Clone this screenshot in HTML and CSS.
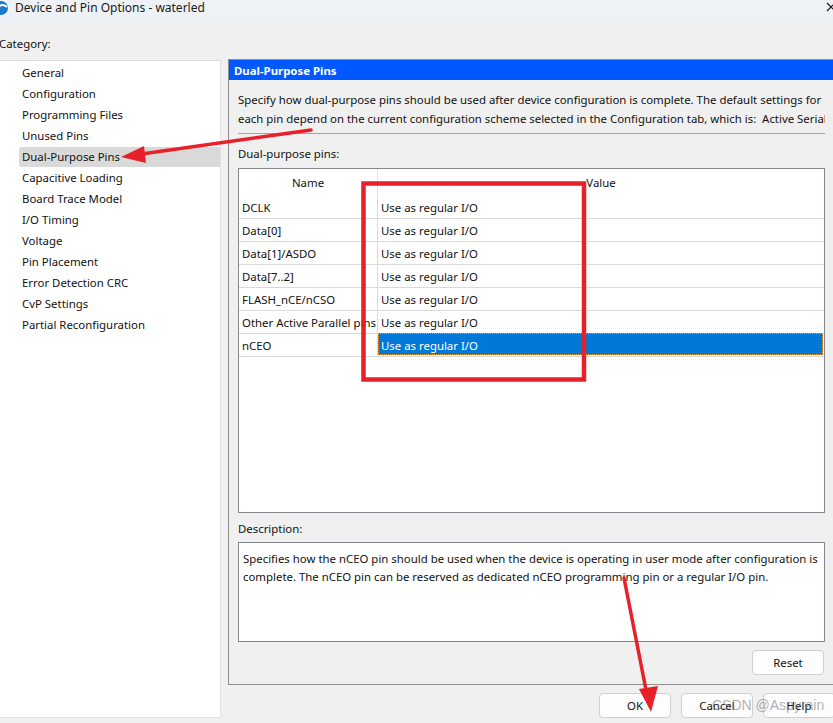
FILE: index.html
```html
<!DOCTYPE html>
<html>
<head>
<meta charset="utf-8">
<title>Device and Pin Options - waterled</title>
<link rel="stylesheet" href="styles.css">
</head>
<body>
<div class="window">
  <div class="titlebar">
    <svg class="appicon" width="10" height="16" viewBox="0 0 10 16">
      <circle cx="1" cy="8" r="7" fill="#1e78c8"/>
      <path d="M-4 10 Q1 2 7 7" stroke="#ffffff" stroke-width="2" fill="none"/>
    </svg>
    <span class="title">Device and Pin Options - waterled</span>
    <svg class="close" width="10" height="10" viewBox="0 0 10 10">
      <path d="M1 1 L9 9 M9 1 L1 9" stroke="#1a1a1a" stroke-width="1.2"/>
    </svg>
  </div>
  <div class="catlabel">Category:</div>
  <div class="content">
    <ul class="catlist">
      <li class="item">General</li>
      <li class="item">Configuration</li>
      <li class="item">Programming Files</li>
      <li class="item">Unused Pins</li>
      <li class="item selected">Dual-Purpose Pins</li>
      <li class="item">Capacitive Loading</li>
      <li class="item">Board Trace Model</li>
      <li class="item">I/O Timing</li>
      <li class="item">Voltage</li>
      <li class="item">Pin Placement</li>
      <li class="item">Error Detection CRC</li>
      <li class="item">CvP Settings</li>
      <li class="item">Partial Reconfiguration</li>
    </ul>
    <div class="rightcol">
      <div class="group">
        <div class="ghead">Dual-Purpose Pins</div>
        <div class="gbody">
          <div class="intro">
            <div class="line">Specify how dual-purpose pins should be used after device configuration is complete. The default settings for</div>
            <div class="line">each pin depend on the current configuration scheme selected in the Configuration tab, which is:&nbsp; Active Serial x1</div>
          </div>
          <div class="sep"></div>
          <div class="lbl">Dual-purpose pins:</div>
          <div class="table">
            <div class="thead">
              <div class="c1 hc">Name</div>
              <div class="c2 hc">Value</div>
            </div>
            <div class="row"><div class="c1">DCLK</div><div class="c2">Use as regular I/O</div></div>
            <div class="row"><div class="c1">Data[0]</div><div class="c2">Use as regular I/O</div></div>
            <div class="row"><div class="c1">Data[1]/ASDO</div><div class="c2">Use as regular I/O</div></div>
            <div class="row"><div class="c1">Data[7..2]</div><div class="c2">Use as regular I/O</div></div>
            <div class="row"><div class="c1">FLASH_nCE/nCSO</div><div class="c2">Use as regular I/O</div></div>
            <div class="row"><div class="c1">Other Active Parallel pins</div><div class="c2">Use as regular I/O</div></div>
            <div class="row"><div class="c1">nCEO</div><div class="c2 sel">Use as regular I/O</div></div>
          </div>
          <div class="lbl desclbl">Description:</div>
          <div class="desc">Specifies how the nCEO pin should be used when the device is operating in user mode after configuration is<br>complete. The nCEO pin can be reserved as dedicated nCEO programming pin or a regular I/O pin.</div>
          <div class="resetrow"><button class="btn reset">Reset</button></div>
        </div>
      </div>
      <div class="btnrow">
        <button class="btn">OK</button>
        <button class="btn">Cancel</button>
        <button class="btn">Help</button>
      </div>
    </div>
  </div>
  <svg class="annot" width="833" height="723" viewBox="0 0 833 723">
    <line x1="311" y1="130" x2="138" y2="154.5" stroke="#e8202a" stroke-width="3.5" stroke-linecap="round"/>
    <polygon points="121,157 144,146 146,163" fill="#e8202a"/>
    <rect x="363.5" y="183.5" width="220.5" height="196" fill="none" stroke="#e8202a" stroke-width="4.5"/>
    <line x1="624" y1="578" x2="647" y2="695" stroke="#e8202a" stroke-width="3.5" stroke-linecap="round"/>
    <polygon points="651,712 639,689 658,686" fill="#e8202a"/>
  </svg>
  <div class="watermark">CSDN @Aspyrain</div>
</div>
</body>
</html>
```

FILE: styles.css
```css
html, body {
  margin: 0;
  padding: 0;
}
body {
  width: 833px;
  height: 723px;
  overflow: hidden;
  background: #f0f0f0;
  font-family: "Noto Sans", "Open Sans", sans-serif;
  font-size: 11.4px;
  color: #111;
}
.window {
  position: relative;
  width: 833px;
  height: 723px;
  overflow: hidden;
}
.titlebar {
  height: 22px;
  background: #eef2f7;
  display: flex;
  align-items: center;
}
.appicon {
  flex: none;
  margin-right: 5px;
  margin-top: -6px;
}
.title {
  font-size: 12px;
  color: #1a1a1a;
  flex: 1;
  margin-top: -7px;
}
.close {
  flex: none;
  margin-right: -3px;
  margin-top: -8px;
}
.catlabel {
  height: 38px;
  box-sizing: border-box;
  padding-top: 14px;
  margin-left: -1px;
  line-height: 16px;
}
.content {
  display: flex;
  align-items: flex-start;
}
.catlist {
  list-style: none;
  margin: 0;
  padding: 2px 0 0 0;
  width: 221px;
  height: 658px;
  box-sizing: border-box;
  background: #fff;
  border-top: 1px solid #dcdcdc;
  border-right: 1px solid #e2e2e2;
  border-bottom: 1px solid #e2e2e2;
  flex: none;
}
.item {
  height: 20px;
  line-height: 20px;
  margin: 0 0 1px 19px;
  padding-left: 3px;
  border-radius: 3px 0 0 3px;
}
.item.selected {
  background: #d9d9d9;
}
.rightcol {
  margin-left: 7px;
  width: 640px;
  flex: none;
  margin-top: -1px;
}
.group {
  border: 1px solid #8e8e8e;
  border-right: none;
  height: 626px;
  box-sizing: border-box;
}
.ghead {
  height: 20px;
  line-height: 21px;
  background: #0058ff;
  color: #fff;
  font-weight: bold;
  padding-left: 5px;
}
.gbody {
  width: 587px;
  margin-left: 9px;
  padding-top: 10px;
}
.intro .line {
  white-space: nowrap;
  overflow: hidden;
  line-height: 19px;
}
.sep {
  height: 1px;
  background: #a3a3a3;
  margin-top: 5px;
}
.lbl {
  line-height: 19px;
  margin-top: 10px;
}
.table {
  margin-top: 5px;
  height: 345px;
  box-sizing: border-box;
  border: 1px solid #84878c;
  background: #fff;
}
.thead {
  display: flex;
  height: 27px;
}
.thead .c1 {
  border-right: 1px solid #e3e3e3;
}
.row {
  display: flex;
  height: 23px;
  box-sizing: border-box;
  border-bottom: 1px solid #d9d9d9;
}
.c1 {
  width: 139px;
  flex: none;
  white-space: nowrap;
  overflow: hidden;
  box-sizing: border-box;
  border-right: 1px solid #d9d9d9;
  padding-left: 3px;
  line-height: 24px;
}
.c2 {
  flex: 1;
  padding-left: 3px;
  line-height: 24px;
  white-space: nowrap;
}
.thead .hc {
  text-align: center;
  padding-left: 0;
  line-height: 28px;
}
.c2.sel {
  background: #0078d7;
  color: #fff;
  outline: 1px dotted #f0a040;
  outline-offset: -1px;
  margin-right: 1px;
  line-height: 22px;
  padding-top: 2px;
  height: 22px;
  box-sizing: border-box;
  margin-top: -1px;
}
.desclbl {
  margin-top: 6px;
}
.desc {
  margin-top: 4px;
  height: 100px;
  box-sizing: border-box;
  border: 1px solid #84878c;
  background: #fff;
  padding: 7px 0 0 4px;
  line-height: 18px;
  white-space: nowrap;
}
.resetrow {
  display: flex;
  justify-content: flex-end;
  margin-top: 8px;
  padding-right: 1px;
}
.btn {
  font-family: "Noto Sans", "Open Sans", sans-serif;
  font-size: 11.4px;
  color: #111;
  width: 72px;
  height: 25px;
  background: #fdfdfd;
  border: 1px solid #d0d0d0;
  border-radius: 4px;
  padding: 0;
}
.btnrow {
  display: flex;
  gap: 10px;
  padding-left: 371px;
  margin-top: 8px;
}
.annot {
  position: absolute;
  left: 0;
  top: 0;
  pointer-events: none;
}
.watermark {
  position: absolute;
  left: 712px;
  top: 697px;
  font-family: "Liberation Sans", sans-serif;
  font-size: 14px;
  color: rgba(110, 110, 110, 0.55);
  pointer-events: none;
}
```
